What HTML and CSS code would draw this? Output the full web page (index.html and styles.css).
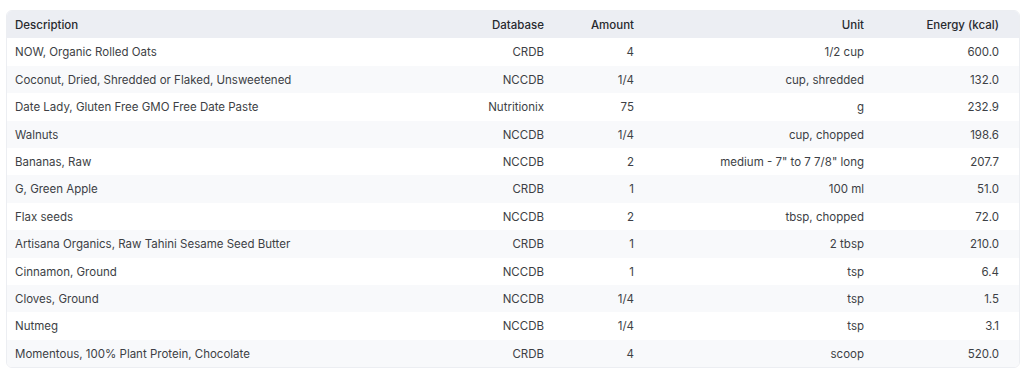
FILE: index.html
```html
<html>
  <head>
    <link rel="stylesheet" href="styles.css">
  </head>
  <body>
    <div class="wrap">
      <table class="foods">
        <colgroup>
          <col class="c-desc">
          <col class="c-db">
          <col class="c-amt">
          <col class="c-unit">
          <col class="c-kcal">
        </colgroup>
        <thead>
          <tr>
            <th class="left">Description</th>
            <th>Database</th>
            <th>Amount</th>
            <th>Unit</th>
            <th>Energy (kcal)</th>
          </tr>
        </thead>
        <tbody>
          <tr><td class="left">NOW, Organic Rolled Oats</td><td>CRDB</td><td>4</td><td>1/2 cup</td><td>600.0</td></tr>
          <tr><td class="left">Coconut, Dried, Shredded or Flaked, Unsweetened</td><td>NCCDB</td><td>1/4</td><td>cup, shredded</td><td>132.0</td></tr>
          <tr><td class="left">Date Lady, Gluten Free GMO Free Date Paste</td><td>Nutritionix</td><td>75</td><td>g</td><td>232.9</td></tr>
          <tr><td class="left">Walnuts</td><td>NCCDB</td><td>1/4</td><td>cup, chopped</td><td>198.6</td></tr>
          <tr><td class="left">Bananas, Raw</td><td>NCCDB</td><td>2</td><td>medium - 7" to 7 7/8" long</td><td>207.7</td></tr>
          <tr><td class="left">G, Green Apple</td><td>CRDB</td><td>1</td><td>100 ml</td><td>51.0</td></tr>
          <tr><td class="left">Flax seeds</td><td>NCCDB</td><td>2</td><td>tbsp, chopped</td><td>72.0</td></tr>
          <tr><td class="left">Artisana Organics, Raw Tahini Sesame Seed Butter</td><td>CRDB</td><td>1</td><td>2 tbsp</td><td>210.0</td></tr>
          <tr><td class="left">Cinnamon, Ground</td><td>NCCDB</td><td>1</td><td>tsp</td><td>6.4</td></tr>
          <tr><td class="left">Cloves, Ground</td><td>NCCDB</td><td>1/4</td><td>tsp</td><td>1.5</td></tr>
          <tr><td class="left">Nutmeg</td><td>NCCDB</td><td>1/4</td><td>tsp</td><td>3.1</td></tr>
          <tr><td class="left">Momentous, 100% Plant Protein, Chocolate</td><td>CRDB</td><td>4</td><td>scoop</td><td>520.0</td></tr>
        </tbody>
      </table>
    </div>
  </body>
</html>
```

FILE: styles.css
```css
body {
  margin: 0;
  background-color: white;
  font-family: Inter, "Noto Sans", sans-serif;
  color: #3d3f45;
}
.wrap {
  padding: 10px 6px;
}
.foods {
  width: 1012px;
  table-layout: fixed;
  border-collapse: separate;
  border-spacing: 0;
  border: 1px solid #eceef2;
  border-radius: 6px;
  overflow: hidden;
  font-size: 11.5px;
}
.c-desc { width: 437px; }
.c-db { width: 120px; }
.c-amt { width: 90px; }
.c-unit { width: 230px; }
.c-kcal { width: 135px; }
th, td {
  padding: 1px 20px 0 8px;
  line-height: 26.4px;
  text-align: right;
  white-space: nowrap;
}
th {
  background-color: #eceef3;
  color: #27292e;
  font-weight: 500;
}
.left {
  text-align: left;
}
tbody tr:nth-child(even) td {
  background-color: #f8f9fb;
}
```
